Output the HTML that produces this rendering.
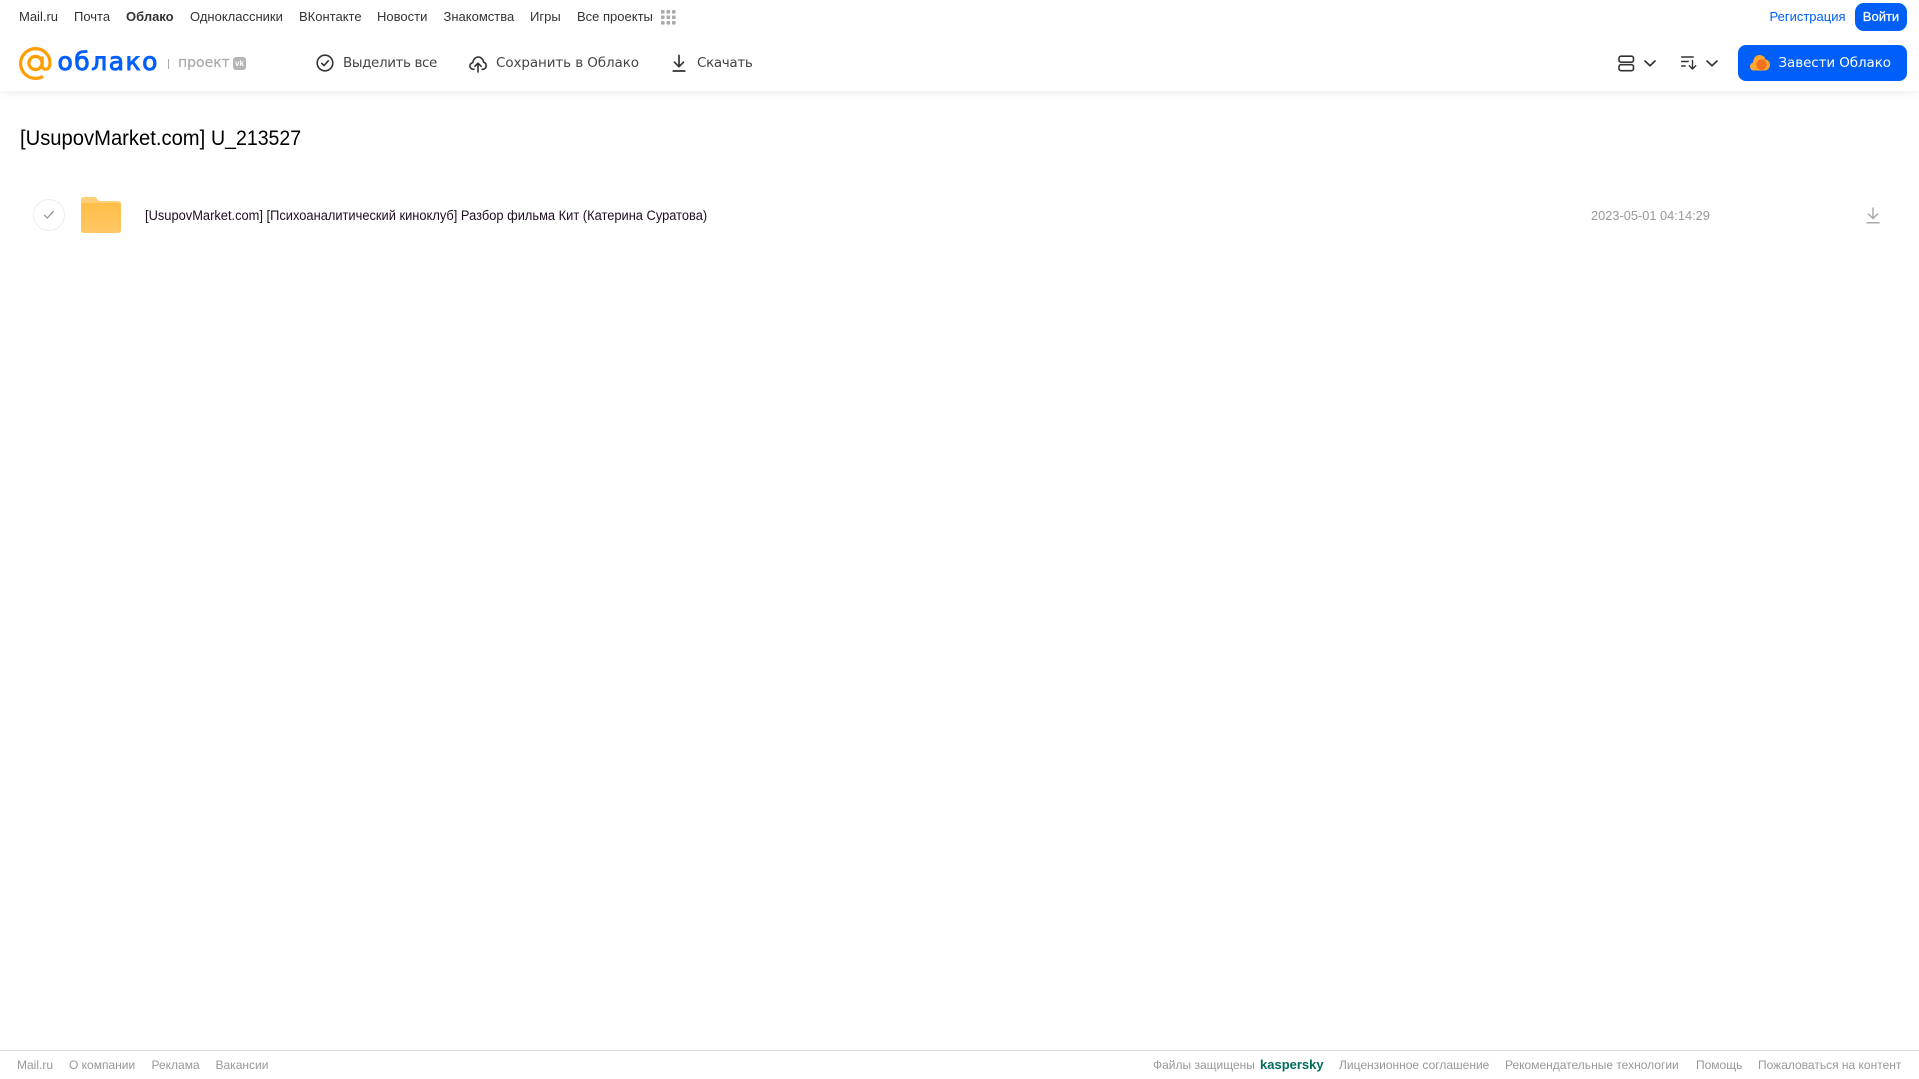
<!DOCTYPE html>
<html lang="ru">
<head>
<meta charset="utf-8">
<title>Облако</title>
<style>
html,body{margin:0;padding:0;background:#fff;width:1919px;height:1079px;overflow:hidden;font-family:"Liberation Sans",sans-serif;}
.t{position:absolute;white-space:nowrap;line-height:20px;height:20px;}
.n{font-size:13px;color:#333;top:7px;}
.b{font-family:"DejaVu Sans",sans-serif;font-size:13.5px;color:#444;top:53px;}
.f{font-size:12px;color:#999;top:1055px;}
svg{position:absolute;overflow:visible;}
</style>
</head>
<body>
<div style="position:absolute;left:0;top:0;width:1919px;height:91px;background:#fff;box-shadow:0 2px 10px rgba(0,0,0,.07);"></div>

<div class="t n" style="left:19px;">Mail.ru</div>
<div class="t n" style="left:74px;">Почта</div>
<div class="t n" style="left:126px;font-weight:bold;">Облако</div>
<div class="t n" style="left:190px;">Одноклассники</div>
<div class="t n" style="left:299px;">ВКонтакте</div>
<div class="t n" style="left:377px;">Новости</div>
<div class="t n" style="left:443.500px;">Знакомства</div>
<div class="t n" style="left:530px;">Игры</div>
<div class="t n" style="left:577px;">Все проекты</div>
<svg style="left:661px;top:10px" width="15" height="15" viewBox="0 0 15 15" fill="#aaa">
<rect x="0" y="0" width="3.6" height="3.6" rx=".8"/><rect x="5.5" y="0" width="3.6" height="3.6" rx=".8"/><rect x="11" y="0" width="3.6" height="3.6" rx=".8"/>
<rect x="0" y="5.5" width="3.6" height="3.6" rx=".8"/><rect x="5.5" y="5.5" width="3.6" height="3.6" rx=".8"/><rect x="11" y="5.5" width="3.6" height="3.6" rx=".8"/>
<rect x="0" y="11" width="3.6" height="3.6" rx=".8"/><rect x="5.5" y="11" width="3.6" height="3.6" rx=".8"/><rect x="11" y="11" width="3.6" height="3.6" rx=".8"/>
</svg>

<div class="t n" style="left:1769.500px;color:#005ff9;">Регистрация</div>
<div style="position:absolute;left:1855px;top:3px;width:52px;height:28px;background:#005ff9;border-radius:9px;color:#fff;font-size:13px;-webkit-text-stroke:.25px #fff;line-height:28px;text-align:center;">Войти</div>

<!-- logo -->
<svg style="left:19px;top:47px" width="33" height="33" viewBox="0 0 33 33" fill="none" stroke="#ff9e00" stroke-width="3.2">
<circle cx="16.5" cy="16" r="6.6"/>
<path d="M23.100 9.500v8.700c0 2.600 1.600 4 3.600 4 2.600 0 4.300-2.300 4.300-6.200C31 7.800 24.500 1.600 16.500 1.600 8.300 1.600 1.600 8.300 1.600 16.500S8.300 31.400 16.500 31.400c2.800 0 5.200-.6 7.500-2"/>
</svg>
<div class="t" style="left:57.500px;top:44px;height:36px;line-height:36px;font-family:'DejaVu Sans',sans-serif;font-size:25px;color:#005ff9;letter-spacing:1.500px;-webkit-text-stroke:.9px #005ff9;">облако</div>
<div style="position:absolute;left:168px;top:59px;width:1px;height:10px;background:#aaa;"></div>
<div class="t" style="left:178px;top:53px;font-family:'DejaVu Sans',sans-serif;font-size:14px;color:#aaa;-webkit-text-stroke:.2px #aaa;">проект</div>
<div style="position:absolute;left:233px;top:57px;width:13px;height:13px;background:#b5b5b5;border-radius:3px;color:#fff;font-size:8px;font-weight:bold;line-height:13px;text-align:center;">vk</div>

<!-- toolbar -->
<svg style="left:316px;top:54px" width="18" height="18" viewBox="0 0 18 18" fill="none" stroke="#333" stroke-width="1.600" stroke-linecap="round" stroke-linejoin="round">
<circle cx="9" cy="9" r="7.800"/><path d="M5.700 9.300l2.300 2.300 4.300-4.800"/>
</svg>
<div class="t b" style="left:343px;letter-spacing:-.4px;">Выделить все</div>
<svg style="left:469px;top:55px" width="18" height="18" viewBox="0 0 18 18" fill="none" stroke="#333" stroke-width="1.600" stroke-linecap="round" stroke-linejoin="round">
<path d="M5 14.300H4.200C2.300 14.300.9 12.800.9 11c0-1.700 1.200-3 2.800-3.300C4.200 4.500 6.400 2 9.200 2c2.900 0 5.100 2.300 5.400 5.200 1.500.4 2.600 1.800 2.600 3.500 0 1.900-1.500 3.600-3.300 3.600H13"/>
<path d="M9 17V8.500M5.900 11.300L9 8.200l3.100 3.100"/>
</svg>
<div class="t b" style="left:496px;letter-spacing:-.1px;">Сохранить в Облако</div>
<svg style="left:671px;top:54px" width="16" height="18" viewBox="0 0 16 18" fill="none" stroke="#333" stroke-width="1.700" stroke-linecap="round" stroke-linejoin="round">
<path d="M8 1.500v11M3.500 8.200L8 12.700l4.500-4.500M2.200 17h11.600"/>
</svg>
<div class="t b" style="left:697px;letter-spacing:-.35px;">Скачать</div>

<!-- right toolbar -->
<svg style="left:1618px;top:55px" width="16" height="17" viewBox="0 0 16 17" fill="none" stroke="#333" stroke-width="1.600">
<rect x="1" y="1.200" width="14.500" height="6" rx="2"/><rect x="1" y="9.700" width="14.500" height="6" rx="2"/>
</svg>
<svg style="left:1644px;top:60px" width="12" height="7" viewBox="0 0 12 7" fill="none" stroke="#333" stroke-width="1.700" stroke-linecap="round" stroke-linejoin="round"><path d="M1 1l5 4.800L11 1"/></svg>
<svg style="left:1681px;top:56px" width="16" height="14" viewBox="0 0 16 14" fill="none" stroke="#333" stroke-width="1.400" stroke-linecap="round" stroke-linejoin="round">
<path d="M.7 1h11.500M.7 5.500h6.500M.7 10h3.500M11.500 4.500v8.500M8.300 9.800l3.200 3.200 3.200-3.200"/>
</svg>
<svg style="left:1706px;top:60px" width="12" height="7" viewBox="0 0 12 7" fill="none" stroke="#333" stroke-width="1.700" stroke-linecap="round" stroke-linejoin="round"><path d="M1 1l5 4.800L11 1"/></svg>

<div style="position:absolute;left:1738px;top:45px;width:169px;height:36px;background:#005ff9;border-radius:8px;"></div>
<svg style="left:1750px;top:54px" width="20" height="17" viewBox="0 0 20 17">
<path d="M4 16.500C1.700 16.500 0 14.800 0 12.500c0-2 1.300-3.500 3-4C3.500 4 6 1 9.500 1c3 0 5.300 1.800 6 4.500 2.600.3 4.500 2.500 4.500 5.200 0 3.200-2.500 5.800-5.500 5.800z" fill="#ffa930"/>
<circle cx="11.500" cy="10.700" r="5.300" fill="#f5701f"/>
</svg>
<div class="t" style="left:1778.500px;top:53px;font-family:'DejaVu Sans',sans-serif;font-size:13.500px;color:#fff;letter-spacing:-.1px;">Завести Облако</div>

<!-- title -->
<div class="t" style="left:20px;top:125px;height:28px;line-height:28px;font-size:21px;color:#000;transform:scaleX(.962);transform-origin:0 50%;">[UsupovMarket.com]</div>
<div class="t" style="left:210.500px;top:125px;height:28px;line-height:28px;font-size:21px;color:#000;transform:scaleX(.93);transform-origin:0 50%;">U_213527</div>

<!-- row -->
<div style="position:absolute;left:33px;top:199px;width:30px;height:30px;border:1px solid #eee;border-radius:50%;"></div>
<svg style="left:43px;top:210px" width="12" height="10" viewBox="0 0 12 10" fill="none" stroke="#999" stroke-width="1.300" stroke-linecap="round" stroke-linejoin="round"><path d="M1.500 5.200l2.800 2.800 6-6.500"/></svg>
<svg style="left:81px;top:197px" width="40" height="36" viewBox="0 0 40 36">
<defs><linearGradient id="g" x1="0" y1="0" x2="0" y2="1"><stop offset="0" stop-color="#ffbf47"/><stop offset="1" stop-color="#ffc765"/></linearGradient></defs>
<path d="M0 3C0 1.300 1.300 0 3 0h10c1.500 0 2.500 1 3.500 2.500.6.900 1.300 1.500 2.500 1.500H37c1.700 0 3 1.300 3 3v26c0 1.700-1.300 3-3 3H3c-1.700 0-3-1.300-3-3z" fill="#ffcf78"/>
<path d="M0 8.500C0 7 .8 6 2.500 6H38c1.300 0 2 1 2 2.500V33c0 1.700-1.300 3-3 3H3c-1.700 0-3-1.300-3-3z" fill="url(#g)"/>
</svg>
<div class="t" style="left:145px;top:206px;font-size:13.500px;color:#1f0f1f;transform:scaleX(.953);transform-origin:0 50%;">[UsupovMarket.com] [Психоаналитический киноклуб] Разбор фильма Кит (Катерина Суратова)</div>
<div class="t" style="left:1591px;top:206px;font-size:13px;color:#999;transform:scaleX(.985);transform-origin:0 50%;">2023-05-01 04:14:29</div>
<svg style="left:1866px;top:207px" width="14" height="17" viewBox="0 0 14 17" fill="none" stroke="#aaa" stroke-width="1.500" stroke-linecap="round" stroke-linejoin="round">
<path d="M7 1v10.500M2.500 7L7 11.500 11.500 7M1 15.700h12"/>
</svg>

<!-- footer -->
<div style="position:absolute;left:0;top:1050px;width:1919px;height:1px;background:#ddd;"></div>
<div class="t f" style="left:17px;">Mail.ru</div>
<div class="t f" style="left:69px;">О компании</div>
<div class="t f" style="left:151.500px;">Реклама</div>
<div class="t f" style="left:215.500px;">Вакансии</div>
<div class="t f" style="left:1153px;">Файлы защищены</div>
<div class="t f" style="left:1260px;color:#006d5c;font-weight:bold;font-size:13px;">kaspersky</div>
<div class="t f" style="left:1339px;">Лицензионное соглашение</div>
<div class="t f" style="left:1505px;">Рекомендательные технологии</div>
<div class="t f" style="left:1696px;">Помощь</div>
<div class="t f" style="left:1758px;">Пожаловаться на контент</div>
</body>
</html>
